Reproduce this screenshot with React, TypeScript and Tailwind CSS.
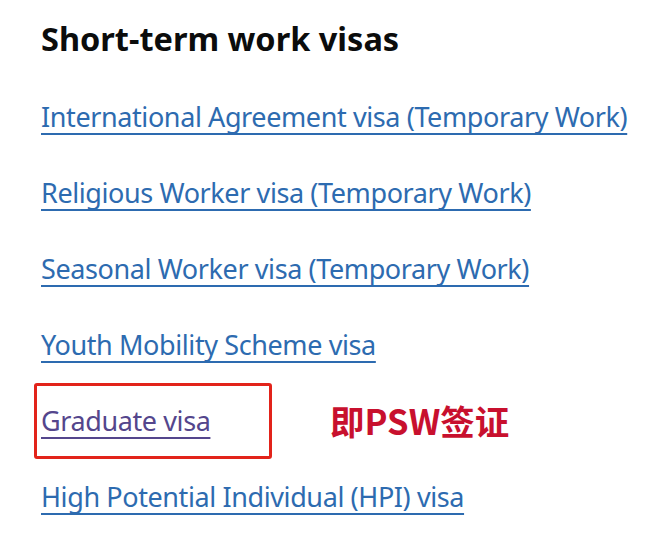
import React from "react";

const links = [
  "International Agreement visa (Temporary Work)",
  "Religious Worker visa (Temporary Work)",
  "Seasonal Worker visa (Temporary Work)",
  "Youth Mobility Scheme visa",
];

const linkClass =
  "text-[#2d6bb0] text-[27px] underline decoration-[1.5px] underline-offset-[6px] [text-decoration-skip-ink:none] tracking-[-0.4px]";

export default function App() {
  return (
    <div className="w-[657px] h-[541px] bg-white pl-[41px] font-['Noto_Sans','Noto_Sans_CJK_SC',sans-serif] overflow-hidden">
      <div className="h-[79px] pt-[18px]">
        <h2 className="text-[32.5px] font-bold leading-[42px] text-[#0b0c0c]">Short-term work visas</h2>
      </div>

      {links.map((t) => (
        <div key={t} className="h-[76px] flex items-center">
          <a href="#" className={linkClass}>{t}</a>
        </div>
      ))}

      {/* Graduate row with highlight box */}
      <div className="h-[76px] flex items-center">
        <div className="-ml-[7px] h-[76px] w-[238px] pl-[4px] border-[3px] border-[#e2231a] rounded-[3px] flex items-center">
          <a href="#" className="text-[#54468c] text-[27px] underline decoration-[1.5px] underline-offset-[6px] [text-decoration-skip-ink:none] tracking-[-0.4px]">Graduate visa</a>
        </div>
        <span className="ml-[58px] text-[34.5px] font-bold text-[#c8102e] font-['Noto_Sans_CJK_SC',sans-serif]">即PSW签证</span>
      </div>

      <div className="h-[76px] flex items-center">
        <a href="#" className={linkClass}>High Potential Individual (HPI) visa</a>
      </div>
    </div>
  );
}
